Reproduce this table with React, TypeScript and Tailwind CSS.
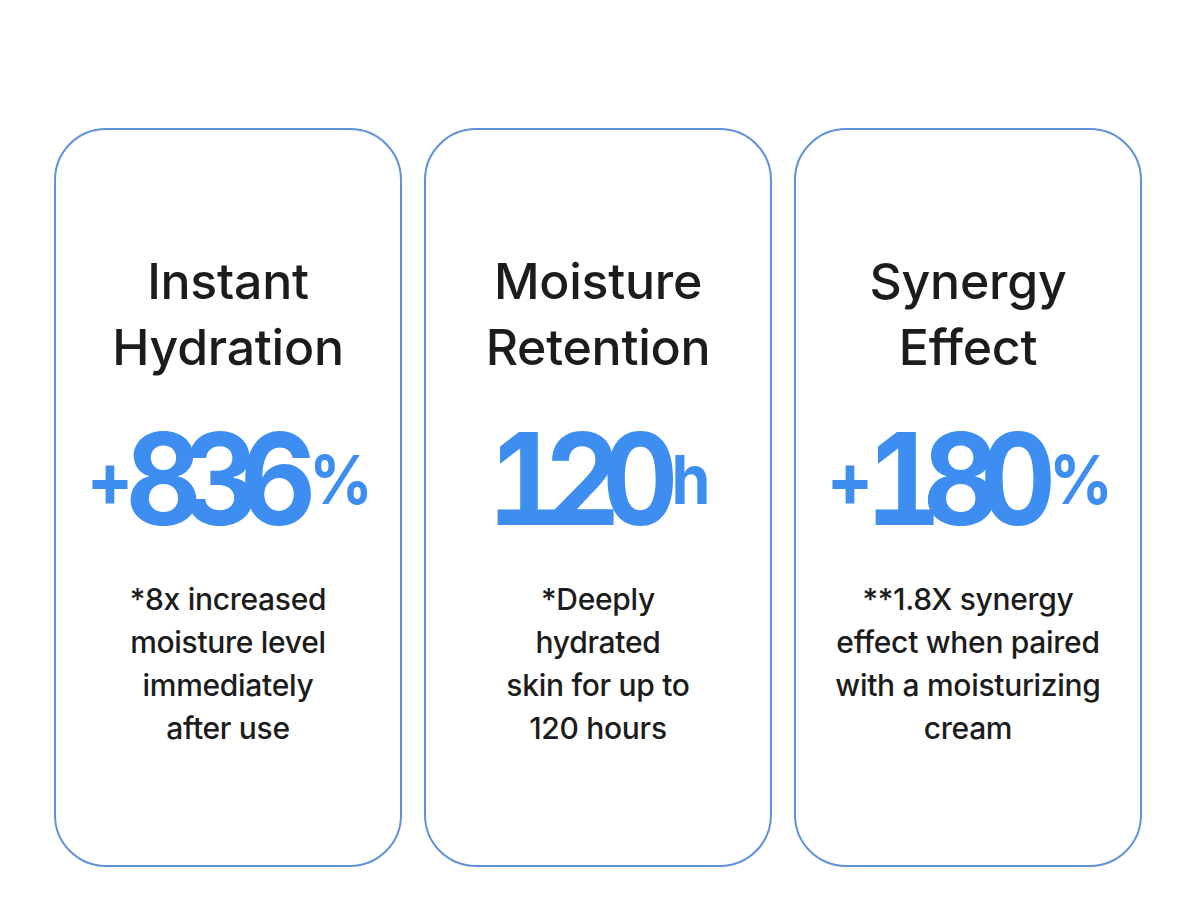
const cards = [
  {
    title: ["Instant", "Hydration"],
    prefix: "+",
    value: "836",
    suffix: "%",
    desc: ["*8x increased", "moisture level", "immediately", "after use"],
  },
  {
    title: ["Moisture", "Retention"],
    prefix: "",
    value: "120",
    suffix: "h",
    desc: ["*Deeply", "hydrated", "skin for up to", "120 hours"],
  },
  {
    title: ["Synergy", "Effect"],
    prefix: "+",
    value: "180",
    suffix: "%",
    desc: ["**1.8X synergy", "effect when paired", "with a moisturizing", "cream"],
  },
]

function StatCard({ card }: { card: (typeof cards)[number] }) {
  return (
    <div className="flex h-[739px] w-[348px] flex-col items-center rounded-[52px] border-2 border-[#5f92d9] pt-[118px] text-center">
      <h2 className="text-[50px] font-medium leading-[66px] tracking-[-0.005em] text-[#1c1c1c]">
        {card.title.map((line) => (
          <div key={line}>{line}</div>
        ))}
      </h2>
      <div className="mt-[34px] flex h-[130px] scale-x-[0.92] items-center font-bold text-[#3d8ef0]">
        {card.prefix && (
          <span className="text-[76px] leading-none tracking-[-0.12em]">{card.prefix}</span>
        )}
        <span className="text-[128px] leading-none tracking-[-0.16em] tabular-nums">{card.value}</span>
        <span className="ml-[13px] text-[68px] leading-none tracking-[-0.04em]">{card.suffix}</span>
      </div>
      <p className="mt-[34px] text-[30px] font-medium leading-[43px] tracking-[-0.01em] text-[#1c1c1c]">
        {card.desc.map((line) => (
          <span key={line} className="block">
            {line}
          </span>
        ))}
      </p>
    </div>
  )
}

export default function App() {
  return (
    <div className="h-[924px] w-[1200px] bg-white pl-[54px] pt-[128px] font-['Inter',sans-serif]">
      <div className="flex gap-[22px]">
        {cards.map((card) => (
          <StatCard key={card.value} card={card} />
        ))}
      </div>
    </div>
  )
}
